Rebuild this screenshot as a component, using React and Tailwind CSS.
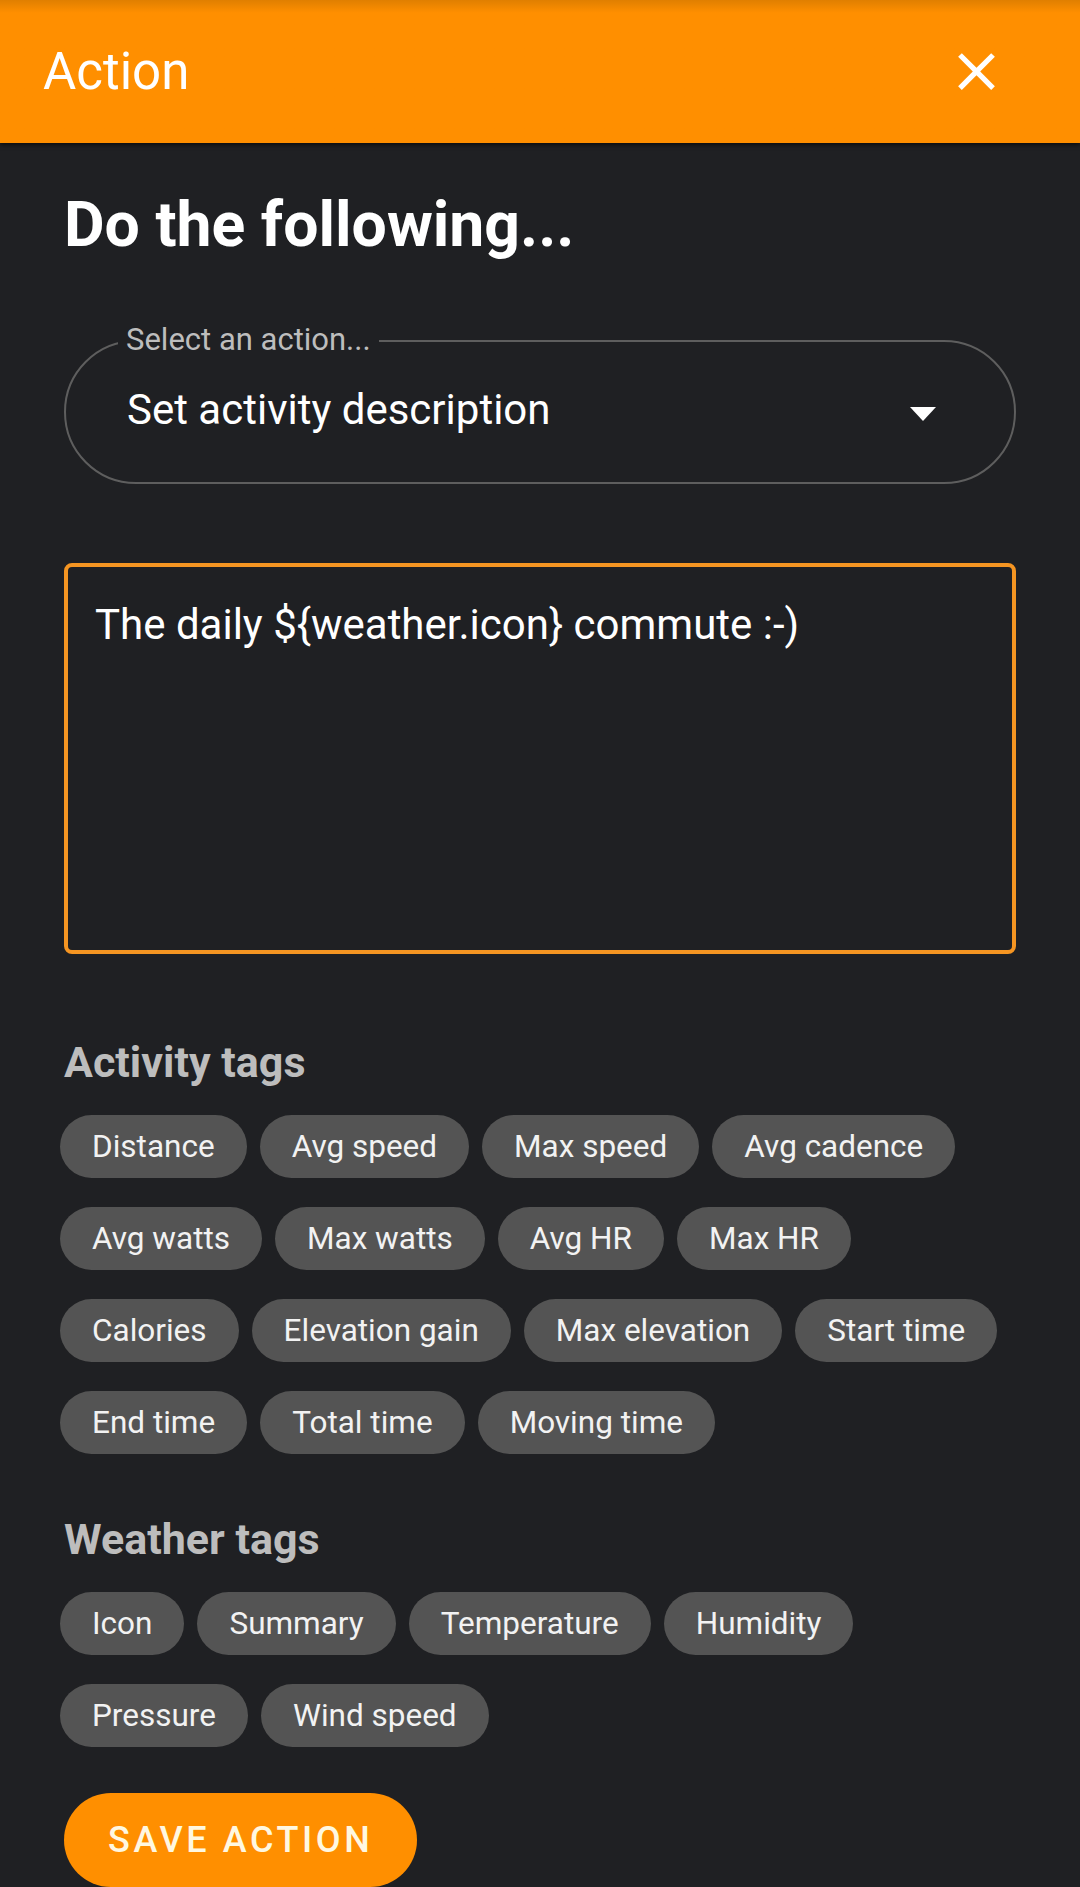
import React, { useState } from 'react';

const activityTags = [
  'Distance', 'Avg speed', 'Max speed', 'Avg cadence',
  'Avg watts', 'Max watts', 'Avg HR', 'Max HR',
  'Calories', 'Elevation gain', 'Max elevation', 'Start time',
  'End time', 'Total time', 'Moving time',
];

const weatherTags = ['Icon', 'Summary', 'Temperature', 'Humidity', 'Pressure', 'Wind speed'];

const Chip = ({ label, onClick }) => (
  <button
    onClick={onClick}
    className="h-[63px] px-[32px] rounded-full bg-[#545454] text-[#f2f2f2] text-[31.5px] leading-none flex items-center"
  >
    {label}
  </button>
);

const TagGroup = ({ title, tags, onPick }) => (
  <div>
    <h2 className="text-[43px] leading-[48px] font-bold text-[#bdbdbd]">{title}</h2>
    <div className="mt-[29px] -ml-[4px] flex flex-wrap gap-x-[13px] gap-y-[29px]">
      {tags.map((t) => (
        <Chip key={t} label={t} onClick={() => onPick(t)} />
      ))}
    </div>
  </div>
);

export default function App() {
  const [text, setText] = useState('The daily ${weather.icon} commute :-)');

  return (
    <div className="min-h-screen bg-[#1f2023] text-white" style={{ fontFamily: 'Roboto, "Noto Sans", sans-serif' }}>
      <header className="h-[143px] flex items-center justify-between pl-[43px] pr-[72px] bg-linear-to-b from-[#e07f00] from-0% to-[#ff8f00] to-[9%] shadow-[0_2px_4px_rgba(0,0,0,0.6)]">
        <h1 className="text-[51px] leading-none font-normal">Action</h1>
        <button aria-label="Close">
          <svg width="63" height="63" viewBox="0 0 24 24" fill="white">
            <path d="M19 6.41L17.59 5 12 10.59 6.41 5 5 6.41 10.59 12 5 17.59 6.41 19 12 13.41 17.59 19 19 17.59 13.41 12z" />
          </svg>
        </button>
      </header>

      <main className="px-[64px] pt-[45px] pb-[40px]">
        <h2 className="text-[62.5px] leading-[73px] font-bold">Do the following...</h2>

        <div className="relative mt-[79px] h-[144px] rounded-full border-2 border-[#5e5e5e] flex items-center justify-between pl-[61px] pr-[78px]">
          <span className="absolute left-[52px] -top-[19px] px-[8px] bg-[#1f2023] text-[31px] leading-[34px] text-[#bdbdbd]">
            Select an action...
          </span>
          <span className="text-[42px] leading-[48px] -mt-[4px]">Set activity description</span>
          <svg width="26" height="14" viewBox="0 0 26 14" className="mt-[4px]">
            <polygon points="0,0 26,0 13,14" fill="white" />
          </svg>
        </div>

        <textarea
          value={text}
          onChange={(e) => setText(e.target.value)}
          className="mt-[79px] block w-full h-[391px] resize-none rounded-[8px] border-4 border-[#f59522] bg-transparent px-[27px] pt-[34px] text-[42px] leading-[48px] text-white outline-none"
        />

        <div className="mt-[84px]">
          <TagGroup title="Activity tags" tags={activityTags} onPick={(t) => setText((s) => s + ' ${' + t + '}')} />
        </div>

        <div className="mt-[61px]">
          <TagGroup title="Weather tags" tags={weatherTags} onPick={(t) => setText((s) => s + ' ${' + t + '}')} />
        </div>

        <button className="mt-[46px] h-[94px] px-[44px] rounded-full bg-[#ff8f00] text-[#fff8e1] text-[36px] font-medium tracking-[0.1em] leading-none">
          SAVE ACTION
        </button>
      </main>
    </div>
  );
}
